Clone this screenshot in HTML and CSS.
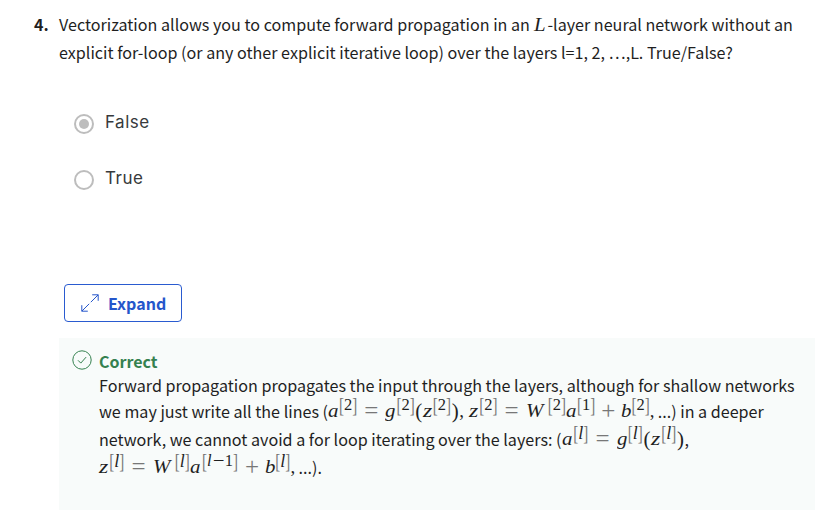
FILE: index.html
```
<!DOCTYPE html>
<html lang="en">
<head>
<meta charset="utf-8">
<title>Quiz question</title>
<link rel="stylesheet" href="styles.css">
</head>
<body>
<main class="question">
  <div class="number">4.</div>
  <div class="body">
    <div class="prompt">
      <p class="line p1"><span class="t1">Vectorization allows you to compute forward propagation in an</span> <i class="m big-l">L</i><span class="t1">-layer neural network without an</span></p>
      <p class="line p2">explicit for-loop (or any other explicit iterative loop) over the layers l=1, 2, …,L. True/False?</p>
    </div>
    <div class="options">
      <label class="option"><span class="radio checked"></span><span>False</span></label>
      <label class="option"><span class="radio"></span><span>True</span></label>
    </div>
    <button class="expand" type="button">
      <svg width="20" height="20" viewBox="0 0 20 20" fill="none" stroke="currentColor" stroke-width="1"><path d="M10.8 9.2 18.2 1.8M12.2 1.8h6v6M9.2 10.8 1.8 18.2M1.8 12.2v6h6"/></svg>
      <span>Expand</span>
    </button>
    <section class="feedback">
      <svg class="check" width="20" height="20" viewBox="0 0 20 20" fill="none" stroke="currentColor" stroke-width="1"><circle cx="10" cy="10" r="9.2"/><path d="m6 10.3 2.8 2.8 5.3-6"/></svg>
      <div class="text">
        <h2>Correct</h2>
        <p class="line f1">Forward propagation propagates the input through the layers, although for shallow networks</p>
        <p class="line f2"><span class="lead2">we may just write all the lines (</span><i class="m va">a</i><span class="sup"><b>[</b>2<b>]</b></span><span class="m op">=</span><i class="m vg">g</i><span class="sup"><b>[</b>2<b>]</b></span><span class="m par">(</span><i class="m vz">z</i><span class="sup"><b>[</b>2<b>]</b></span><span class="m par">)</span><span class="m comma">,</span><i class="m vz">z</i><span class="sup"><b>[</b>2<b>]</b></span><span class="m op">=</span><i class="m vw">W</i><span class="sup"><b>[</b>2<b>]</b></span><i class="m va">a</i><span class="sup"><b>[</b>1<b>]</b></span><span class="m op plus">+</span><i class="m vb">b</i><span class="sup"><b>[</b>2<b>]</b></span><span class="m comma last">,</span><span class="tail">...) in a deeper</span></p>
        <p class="line f3"><span class="lead3">network, we cannot avoid a for loop iterating over the layers: (</span><i class="m va">a</i><span class="sup l"><b>[</b><i>l</i><b>]</b></span><span class="m op">=</span><i class="m vg">g</i><span class="sup l"><b>[</b><i>l</i><b>]</b></span><span class="m par">(</span><i class="m vz">z</i><span class="sup l"><b>[</b><i>l</i><b>]</b></span><span class="m par">)</span><span>,</span></p>
        <p class="line f4"><i class="m vz">z</i><span class="sup l"><b>[</b><i>l</i><b>]</b></span><span class="m op">=</span><i class="m vw">W</i><span class="sup l"><b>[</b><i>l</i><b>]</b></span><i class="m va">a</i><span class="sup wide"><b>[</b><i>l</i><span class="minus">−</span>1<b>]</b></span><span class="m op plus">+</span><i class="m vb">b</i><span class="sup l"><b>[</b><i>l</i><b>]</b></span><span class="m comma last">,</span><span class="tail">...).</span></p>
      </div>
    </section>
  </div>
</main>
</body>
</html>
```
FILE: styles.css
```
* { box-sizing: border-box; }
body {
  margin: 0;
  background: #fff;
  color: #1f1f1f;
  font: 16.13px/28px "Noto Sans CJK SC", "Noto Sans", sans-serif;
}
p, h2 { margin: 0; }
.question { display: flex; padding: 10px 13px 0 34px; }
.number { width: 25px; flex: none; font-weight: 700; }
.body { flex: 1; min-width: 0; }
.prompt { height: 86px; }
.line { white-space: nowrap; height: 28px; }

.options {
  display: flex;
  flex-direction: column;
  height: 188px;
  padding-left: 15px;
  font: 17px/56px Inter, sans-serif;
  letter-spacing: 0.5px;
  color: #373a3c;
}
.option { display: flex; align-items: center; height: 56px; }
.option span:last-child { position: relative; top: -2px; }
.radio {
  width: 20px;
  height: 20px;
  margin-right: 11px;
  border: 2px solid #bdbdbd;
  border-radius: 50%;
  display: grid;
  place-items: center;
}
.checked::after {
  content: "";
  width: 10px;
  height: 10px;
  border-radius: 50%;
  background: #bdbdbd;
}

.expand {
  display: flex;
  align-items: center;
  gap: 8px;
  width: 118px;
  height: 38px;
  margin-left: 5px;
  padding: 0 0 0 15px;
  border: 1px solid #2a5bd0;
  border-radius: 4px;
  background: #fff;
  color: #2556cb;
  font: 700 16px/28px "Noto Sans CJK SC", sans-serif;
}

.feedback {
  display: flex;
  height: 172px;
  margin-top: 16px;
  padding: 11px 0 0 13px;
  background: #f8fbfa;
}
.check { flex: none; margin: 1px 7px 0 0; color: #35814f; }
h2 { height: 24px; font-size: 16px; line-height: 24px; color: #35814f; }
.f1 { height: 26px; line-height: 24px; }
.f2, .f3, .f4 { display: flex; line-height: 24px; }
.f4 { height: 27px; }
.lead2 { width: 229px; }
.lead3 { width: 463px; }

.m { font-family: "Liberation Serif", serif; font-size: 19px; }
i.m { transform: scaleX(1.1); transform-origin: left center; }
.big-l { display: inline-block; width: 14px; line-height: 20px; }
.va { width: 11px; }
.vg { width: 11px; }
.vz { width: 10px; }
.vw { width: 22px; }
.vb { width: 10px; }
i.vz { transform: scaleX(1.25); }
.op { width: 28px; text-align: center; color: #777; font-size: 25px; }
.plus { width: 26px; }
.par { width: 8px; text-align: center; font-size: 21px; }
.comma { width: 10px; }
.last { width: 8px; }
.sup {
  display: flex;
  justify-content: center;
  width: 18.4px;
  height: 24px;
  margin-top: -6.5px;
  font: 16.5px/24px "Liberation Serif", serif;
}
.sup b { width: 5px; font-size: 15px; font-weight: 400; color: #777; transform: scaleY(1.35); }
.sup.l { width: 15.5px; }
.sup.l i { font-size: 18px; }
.sup.wide { width: 38px; }
.minus { width: 13px; text-align: center; transform: scaleX(1.25); }
```
